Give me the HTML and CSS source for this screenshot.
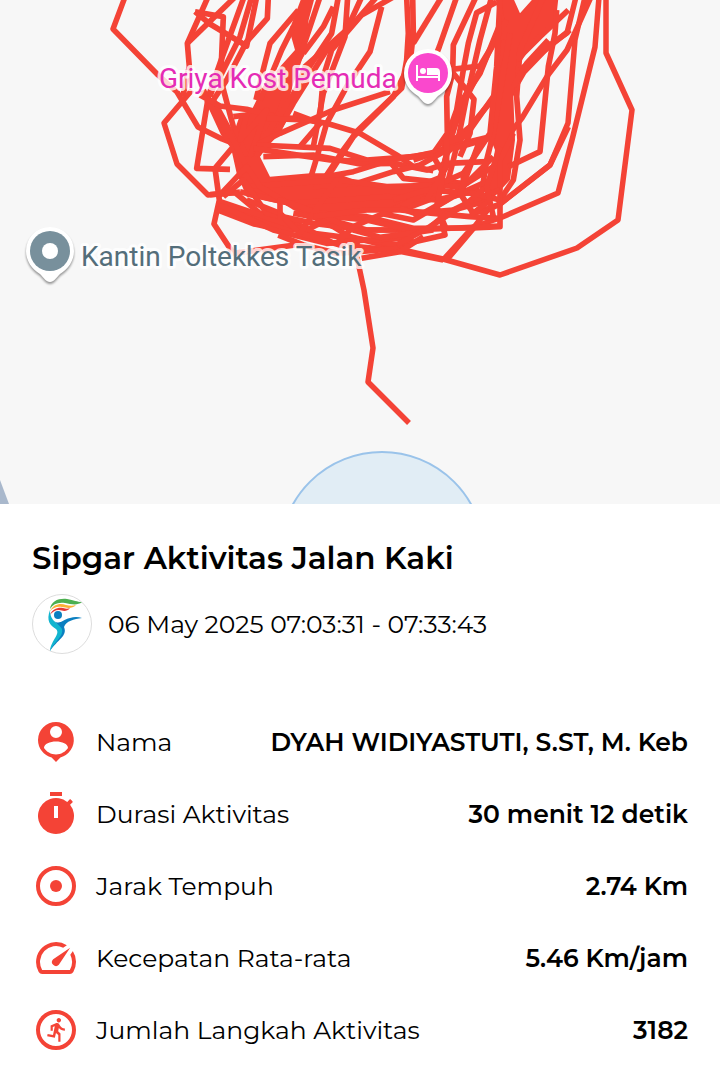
FILE: index.html
```html
<!DOCTYPE html>
<html lang="id">
<head>
  <meta charset="UTF-8">
  <meta name="viewport" content="width=device-width, initial-scale=1">
  <title>Sipgar Aktivitas Jalan Kaki</title>
  <link rel="stylesheet" href="styles.css">
</head>
<body>

<svg class="map" viewBox="0 0 720 504" role="img" aria-label="Rute aktivitas">
  <path class="water" d="M0 480L9 504H0z"/>
  <circle class="area" cx="382" cy="554" r="102"/>

  <!-- rute: putaran luar -->
  <g class="route">
    <path d="M125 -3L113 29L158 75L177 92L198 127L222 139L250 150"/>
    <path d="M192 90L164 123L177 164L208 195L240 192"/>
    <path d="M599 -3L595 47L572 140L558 193L500 218L473 227L443 260"/>
    <path d="M606 -3L606 53L632 110L618 220L577 248L500 275L443 259L403 250L340 234"/>
    <path d="M585 -3L575 40L568 123L550 165L500 204L470 215"/>
    <path d="M591 -3L567 50L548 75L522 118L505 140"/>
    <path d="M576 -3L567 33L550 45L524 72L510 96"/>
    <path d="M355 248L364 290L373 348L368 382L409 423"/>
  </g>

  <!-- rute: putaran dalam -->
  <g class="route route-inner" transform="translate(180 0) scale(.33333)">
    <path class="solid" d="M362 0H402L386 60L374 165L350 205L330 290L340 320L300 400L262 440L240 470L270 530L390 520L470 520L550 550L700 556L790 520L800 560L770 600L690 630L560 634L420 640L340 620L200 590L170 520L150 430L180 345L215 330L240 280L300 200L345 150L328 90z"/>
    <path class="solid" d="M115 602L270 650L390 700L290 695L220 680L115 640z"/>
    <path class="solid" d="M965 -5H1000L1020 40L1060 -5H1135L1128 60L1060 130L1020 190L1000 290L1005 420L990 540L925 610L925 570L945 450L925 400L945 290L950 180z"/>

    <path d="M84 -9L22 130L28 200L8 290"/>
    <path d="M165 -9L22 130"/>
    <path d="M45 35L130 50L124 190L90 290"/>
    <path d="M45 35L90 72L200 138L230 -9"/>
    <path d="M192 -9L120 190L85 290L50 505L150 508"/>
    <path d="M215 -9L180 110L120 230L160 380L200 470"/>
    <path d="M265 -9L262 55L200 125L140 240L100 300L175 440"/>
    <path d="M355 30L270 130L252 200L228 300"/>
    <path d="M340 80L305 150L272 230L240 300"/>
    <path d="M70 270L130 400L160 440L105 505L118 600L102 672L160 760L345 735"/>
    <path d="M80 300L160 420L200 500"/>
    <path d="M60 285L120 318L200 328L290 350L380 360"/>
    <path d="M160 350L200 345L180 420L260 330L210 470"/>
    <path d="M420 -9L350 200L300 330L230 470"/>
    <path d="M475 -9L455 100L375 220L330 300L240 430"/>
    <path d="M503 -9L495 110L430 280L400 440"/>
    <path d="M545 -9L500 90L375 200L340 300"/>
    <path d="M640 -9L545 45L455 150L430 230L420 350"/>
    <path d="M605 20L570 155L500 260L440 370L420 440L390 540"/>
    <path d="M590 -9L530 60L440 150L340 310L290 400"/>
    <path d="M460 20L430 80L370 160"/>
    <path d="M680 -9L685 100L680 180L665 265L530 395L490 450L430 540"/>
    <path d="M698 -9L700 100L690 190L640 290L520 410L450 520"/>
    <path d="M785 -9L700 130"/>
    <path d="M830 -9L778 140L770 160"/>
    <path d="M630 275L460 330L300 400L240 430"/>
    <path d="M260 355L380 360L440 370L540 400L655 468L700 500L760 512"/>
    <path d="M340 340L420 370L360 440"/>

    <path d="M888 -9L820 135L818 220L800 290L802 400L760 460"/>
    <path d="M950 6L890 38L865 130L850 210L830 330L790 440"/>
    <path d="M815 208L900 198L935 140"/>
    <path d="M820 220L882 298L870 400L840 470"/>
    <path d="M935 -9L900 120L870 250L810 420L790 500"/>
    <path d="M955 -9L965 60L900 220L840 310L810 430L770 570"/>
    <path d="M980 60L920 170L860 290L830 440L800 560"/>
    <path d="M975 120L950 210L945 290L870 380L760 470"/>
    <path d="M940 290L870 390L800 460"/>
    <path d="M950 360L930 410L850 430L700 480"/>
    <path d="M990 100L940 400L920 480L900 610"/>
    <path d="M960 -9L950 200L930 400L850 520L850 580"/>
    <path d="M1090 -9L1020 150L1010 290L1020 420L1000 540L960 600"/>
    <path d="M1130 30L1125 100L1105 200L1080 455L985 500"/>
    <path d="M1170 90L1120 130L1020 210"/>
    <path d="M1105 120L1040 190L1000 260"/>
    <path d="M1165 30L1080 110L1010 180"/>
    <path d="M1165 380L1110 495L960 612L900 640"/>
    <path d="M1000 400L960 480L960 680L880 684"/>

    <path d="M230 435L450 445L560 480L700 470L840 440L930 415"/>
    <path d="M220 445L320 460L450 480L600 485L760 460"/>
    <path d="M250 470L400 465L540 492L640 490L740 510L800 490L920 485"/>
    <path d="M630 485L670 535L760 545L860 550L940 500"/>
    <path d="M400 560L530 550L640 515L720 495L800 450"/>
    <path d="M380 540L520 515L600 490"/>
    <path d="M200 560L330 550L480 540L620 560L760 556L850 560"/>
    <path d="M180 575L330 610L480 600L620 590L770 600L900 570"/>
    <path d="M115 590L200 500L240 560L340 620L460 680L540 730"/>
    <path d="M90 584L165 578L240 640L330 660L460 730"/>
    <path d="M112 602L240 645L400 700L560 720L660 735L795 705L780 640"/>
    <path d="M118 615L280 690L440 730L560 720L700 714"/>
    <path d="M130 590L190 540L260 640L400 670L560 690L700 690L958 678"/>
    <path d="M200 600L300 640L360 700L480 735L640 750L790 780"/>
    <path d="M295 705L370 735L470 760L660 745"/>
    <path d="M545 775L660 755L730 710"/>
    <path d="M340 640L450 660L560 690L650 690"/>
    <path d="M300 660L300 600L420 640L560 650L700 685L860 684"/>
    <path d="M380 690L460 650L560 660L690 690"/>
    <path d="M360 700L420 610L470 540"/>
    <path d="M440 650L520 690L600 712L760 690"/>
    <path d="M465 735L520 680L680 610L760 560L850 520"/>
    <path d="M400 650L560 630L660 630L760 640L870 650L955 655"/>
    <path d="M600 640L700 660L820 590L930 540"/>
    <path d="M660 625L720 645L800 600L860 550L940 470"/>
    <path d="M700 640L820 630L930 600"/>
    <path d="M740 690L800 640L880 600L960 570"/>
    <path d="M640 600L740 570L880 580L960 600"/>
    <path d="M650 735L750 680L860 610L920 560"/>
    <path d="M800 780L880 685L930 620"/>
    <path d="M760 470L790 520L770 620L800 690"/>
    <path d="M800 420L800 500L740 600"/>
    <path d="M900 420L840 580L880 640L930 600"/>
    <path d="M960 440L920 560L940 650"/>
  </g>

  <g transform="translate(428 76)">
    <path class="pin" d="M0 28C-4 28 -6 24 -10 20C-18 15 -24 8 -24 -3A24 24 0 0 1 24 -3C24 8 18 15 10 20C6 24 4 28 0 28z"/>
    <circle class="pin-hotel" cy="-3" r="20"/>
    <path class="bed" d="M-12 -11h2v11H10v-1H-1v-7h9q4 0 4 4V5h-2V2h-20v3h-2z"/>
    <circle class="bed" cx="-5" cy="-5" r="3"/>
  </g>
  <g transform="translate(50 253)">
    <path class="pin" d="M0 29C-4 29 -6 25 -10 21C-18 16 -24 8 -24 -2A24 24 0 0 1 24 -2C24 8 18 16 10 21C6 25 4 29 0 29z"/>
    <circle class="pin-place" cy="-2" r="20"/>
    <circle class="pin-dot" cy="-2" r="8"/>
  </g>

  <text class="place hotel" x="159" y="88">Griya Kost Pemuda</text>
  <text class="place" x="81" y="266">Kantin Poltekkes Tasik</text>
</svg>

<main class="activity">
  <h1>Sipgar Aktivitas Jalan Kaki</h1>

  <div class="meta">
    <svg class="avatar" viewBox="0 0 60 60" aria-hidden="true">
      <circle class="avatar-ring" cx="30" cy="30" r="29.5"/>
      <path fill="#4caf50" d="M18 15C19 7 27 4 35 5C42 6 45 8 50 8C45 12 39 10 33 9C26 8 21 10 18 15z"/>
      <path fill="#fbb034" d="M18 17C22 10 28 9 34 11C38 12 41 12 44 11C40 15 35 14 30 13C25 12 21 14 18 17z"/>
      <path fill="#e53935" d="M18 21C20 15 26 13 31 14C34 15 36 15 38 14C35 18 31 17 27 16C23 16 20 18 18 21z"/>
      <circle fill="#0b7fc0" cx="26" cy="21" r="4"/>
      <path fill="#0b7fc0" d="M22 27C28 31 30 26 38 24Q44 22 50 24C42 25 34 27 32 33C36 42 25 46 18 57C20 48 29 43 28 36Q27 32 22 27z"/>
      <path fill="#12b5cf" d="M18 16C14 27 18 31 24 35C29 40 19 46 18 57C22 48 32 42 30 35C27 29 18 28 18 16z"/>
    </svg>
    <time datetime="2025-05-06T07:03:31">06 May 2025 07:03:31 - 07:33:43</time>
  </div>

  <dl class="details">
    <div class="row">
      <svg class="icon" viewBox="0 0 24 24" aria-hidden="true"><path fill-rule="evenodd" d="M12 2a9 9 0 0 0-9 9c0 4.200 2.900 7.700 6.800 8.700L12 22l2.200-2.300A9 9 0 0 0 12 2zM12 4a3 3 0 1 1 0 6 3 3 0 0 1 0-6zM6 15c0-2 3-3.200 6-3.200s6 1.200 6 3.200c-1.200 1.900-3.500 3.200-6 3.200S7.200 16.900 6 15z"/></svg>
      <dt>Nama</dt>
      <dd>DYAH WIDIYASTUTI, S.ST, M. Keb</dd>
    </div>
    <div class="row">
      <svg class="icon" viewBox="0 0 24 24" aria-hidden="true"><path fill-rule="evenodd" d="M9 1h6v2H9zM19.030 7.390l1.420-1.420c-.43-.51-.9-.99-1.410-1.410l-1.420 1.420A9 9 0 1 0 19.030 7.390zM13 14h-2V8h2z"/></svg>
      <dt>Durasi Aktivitas</dt>
      <dd>30 menit 12 detik</dd>
    </div>
    <div class="row">
      <svg class="icon" viewBox="0 0 24 24" aria-hidden="true"><circle class="ring" cx="12" cy="12" r="9"/><circle cx="12" cy="12" r="3"/></svg>
      <dt>Jarak Tempuh</dt>
      <dd>2.74 Km</dd>
    </div>
    <div class="row">
      <svg class="icon" viewBox="0 0 24 24" aria-hidden="true"><path d="M20.380 8.570l-1.230 1.850a8 8 0 0 1-.22 7.580H5.070A8 8 0 0 1 15.580 6.850l1.850-1.230A10 10 0 0 0 3.350 19a2 2 0 0 0 1.720 1h13.850a2 2 0 0 0 1.740-1 10 10 0 0 0-.27-10.440z"/><path d="M10.590 15.410a2 2 0 0 0 2.830 0l5.660-8.490-8.490 5.660a2 2 0 0 0 0 2.830z"/></svg>
      <dt>Kecepatan Rata-rata</dt>
      <dd>5.46 Km/jam</dd>
    </div>
    <div class="row">
      <svg class="icon" viewBox="0 0 24 24" aria-hidden="true"><circle class="ring" cx="12" cy="12" r="9"/><path transform="translate(6 5.200) scale(.55)" d="M13.490 5.480c1.100 0 2-.9 2-2s-.9-2-2-2-2 .9-2 2 .9 2 2 2zm-3.600 13.900l1-4.400 2.100 2v6h2v-7.500l-2.100-2 .6-3c1.300 1.500 3.300 2.500 5.500 2.500v-2c-1.900 0-3.500-1-4.300-2.400l-1-1.600c-.4-.6-1-1-1.700-1-.3 0-.5.1-.8.1l-5.200 2.200v4.700h2v-3.400l1.800-.7-1.600 8.100-4.900-1-.4 2 7 1.400z"/></svg>
      <dt>Jumlah Langkah Aktivitas</dt>
      <dd>3182</dd>
    </div>
  </dl>
</main>

</body>
</html>
```
FILE: styles.css
```css
body {
  margin: 0;
  background-color: #ffffff;
  color: #000000;
  font-family: Montserrat, Inter, sans-serif;
  font-size: 25px;
}

/* map */
.map {
  display: block;
  width: 100%;
  background-color: #f7f7f7;
}

.water { fill: #a9b8cc; }

.area {
  fill: #e1edf5;
  stroke: #9ac3ea;
  stroke-width: 2;
}

.route {
  fill: none;
  stroke: #f44336;
  stroke-width: 5.5;
  stroke-linejoin: round;
}

.route-inner { stroke-width: 17; }

.solid {
  fill: #f44336;
  stroke: none;
}

.pin {
  fill: #ffffff;
  filter: drop-shadow(0 2px 1px rgba(0, 0, 0, 0.4));
}

.pin-hotel { fill: #fa48cd; }
.pin-place { fill: #78909c; }
.pin-dot,
.bed { fill: #ffffff; }

.place {
  font-family: Roboto, sans-serif;
  font-size: 28px;
  fill: #546e7a;
  stroke: rgba(255, 255, 255, 0.8);
  stroke-width: 6;
  stroke-linejoin: round;
  paint-order: stroke;
}

.place.hotel { fill: #e52cb5; }

/* activity sheet */
.activity {
  padding: 36px 32px 12px;
}

h1 {
  margin: 0 0 18px;
  font-size: 31px;
  line-height: 36px;
  font-weight: 600;
}

.meta {
  display: flex;
  align-items: center;
  gap: 16px;
}

.avatar {
  width: 60px;
  height: 60px;
}

.avatar-ring {
  fill: #ffffff;
  stroke: #dddddd;
}

.details {
  margin: 52px 0 0;
}

.row {
  display: flex;
  align-items: center;
  gap: 16px;
  height: 72px;
}

.icon {
  width: 48px;
  height: 48px;
  fill: #f44336;
}

.icon .ring {
  fill: none;
  stroke: #f44336;
  stroke-width: 2;
}

dd {
  margin: 0 0 0 auto;
  font-weight: 600;
}
```
